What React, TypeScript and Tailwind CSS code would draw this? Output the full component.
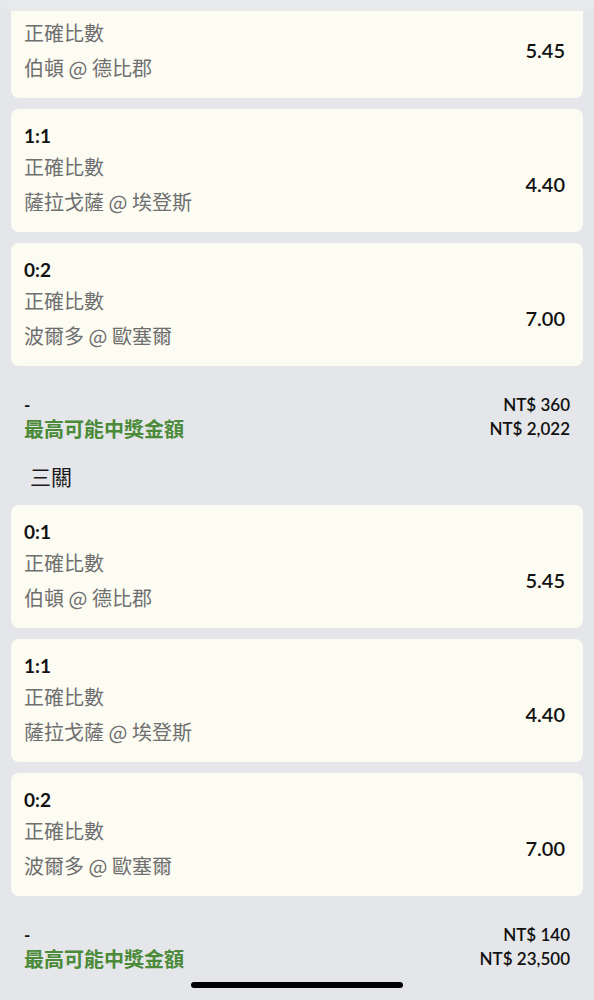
const font = { fontFamily: 'Lato, "Noto Sans CJK TC", sans-serif' };

type Leg = { score?: string; market: string; match: string; odds: string };

const twoLegs: Leg[] = [
  { market: "正確比數", match: "伯頓 @ 德比郡", odds: "5.45" },
  { score: "1:1", market: "正確比數", match: "薩拉戈薩 @ 埃登斯", odds: "4.40" },
  { score: "0:2", market: "正確比數", match: "波爾多 @ 歐塞爾", odds: "7.00" },
];

const threeLegs: Leg[] = [
  { score: "0:1", market: "正確比數", match: "伯頓 @ 德比郡", odds: "5.45" },
  { score: "1:1", market: "正確比數", match: "薩拉戈薩 @ 埃登斯", odds: "4.40" },
  { score: "0:2", market: "正確比數", match: "波爾多 @ 歐塞爾", odds: "7.00" },
];

function LegCard({ leg, cut }: { leg: Leg; cut?: boolean }) {
  return (
    <div
      className={
        "bg-[#fcfcf3] pl-[13px] pr-[18px] pb-[13px] " +
        (cut ? "rounded-b-lg pt-[4px]" : "rounded-lg pt-[14px]")
      }
    >
      {leg.score && (
        <div className="text-[19px] font-bold leading-[26px] text-[#111]">{leg.score}</div>
      )}
      <div className="flex items-center justify-between">
        <div className="font-['Noto_Sans_CJK_TC',sans-serif] text-[20px] leading-[35px] text-[#6f6f6f]">
          <div>{leg.market}</div>
          <div>{leg.match}</div>
        </div>
        <div className="text-[20px] font-semibold text-[#111]">{leg.odds}</div>
      </div>
    </div>
  );
}

function Summary({ stake, prize }: { stake: string; prize: string }) {
  return (
    <div className="mt-[27px] flex justify-between pl-[13px] pr-[13px] leading-[24px]">
      <div>
        <div className="text-[17px] font-bold text-[#111]">-</div>
        <div className="text-[20px] font-bold text-[#4b8a39]">最高可能中獎金額</div>
      </div>
      <div className="text-right text-[17px] font-semibold text-[#111]">
        <div>{stake}</div>
        <div>{prize}</div>
      </div>
    </div>
  );
}

export default function App() {
  return (
    <div className="relative min-h-screen overflow-hidden bg-[#e5e6e9]" style={font}>
      <div className="h-[11px] rounded-b-xl bg-[#e8e9eb]" />
      <div className="px-[11px]">
        <div className="flex flex-col gap-[11px]">
          {twoLegs.map((leg, i) => (
            <LegCard key={i} leg={leg} cut={i === 0} />
          ))}
        </div>
        <Summary stake="NT$ 360" prize="NT$ 2,022" />
        <div className="mt-[22px] pl-[19px] text-[21px] leading-[28px] text-[#1a1a1a]">三關</div>
        <div className="mt-[14px] flex flex-col gap-[11px]">
          {threeLegs.map((leg, i) => (
            <LegCard key={i} leg={leg} />
          ))}
        </div>
        <Summary stake="NT$ 140" prize="NT$ 23,500" />
      </div>
      <div className="fixed bottom-[12px] left-1/2 h-[6px] w-[212px] -translate-x-1/2 rounded-full bg-black" />
    </div>
  );
}
